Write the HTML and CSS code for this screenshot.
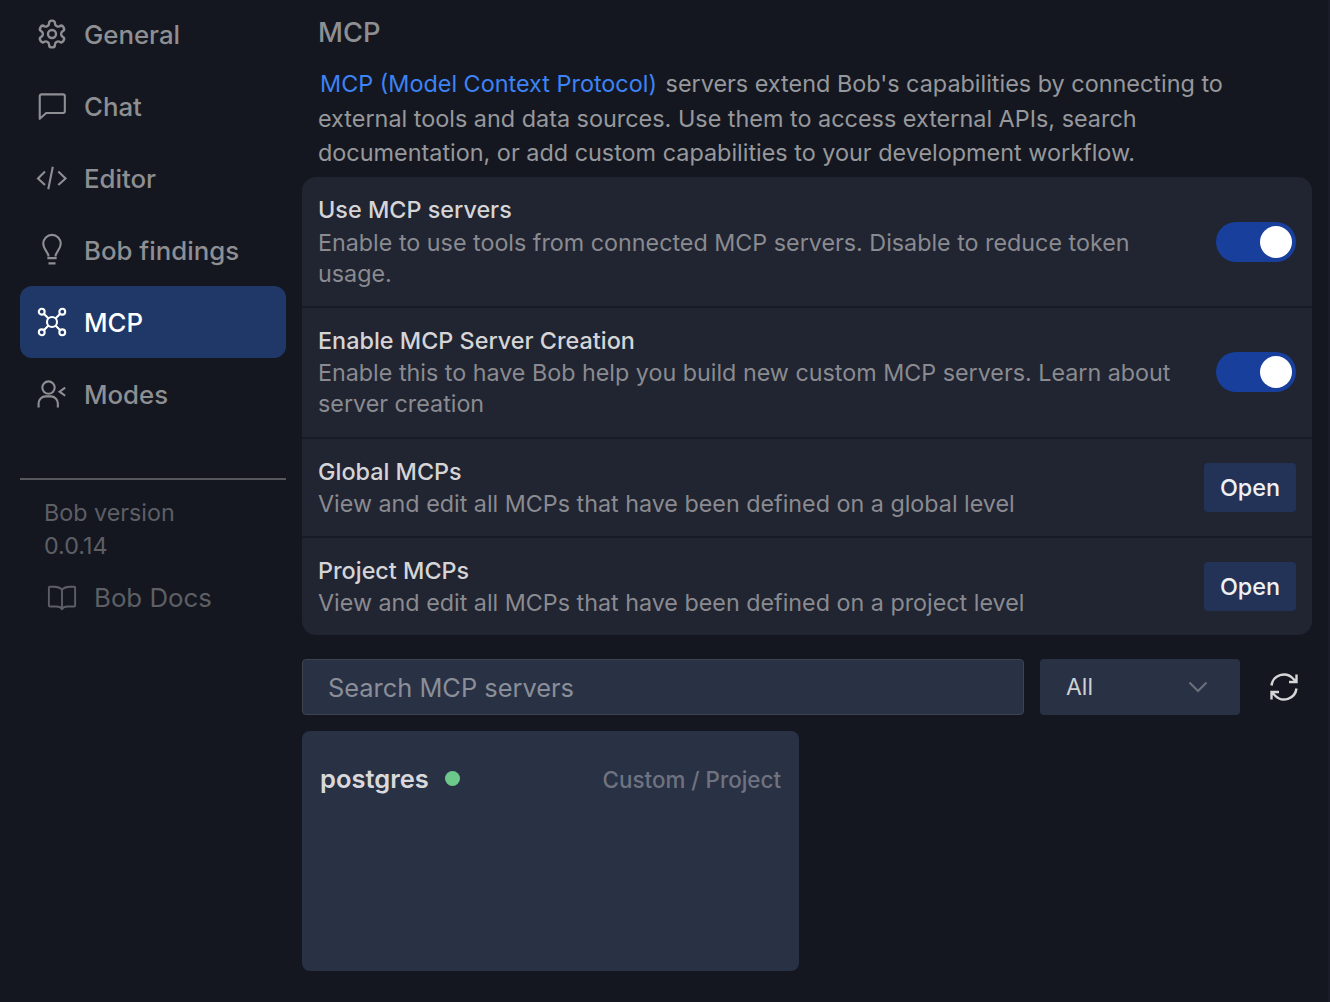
FILE: index.html
```html
<!DOCTYPE html>
<html lang="en">
<head>
<meta charset="utf-8">
<title>MCP settings</title>
<link rel="stylesheet" href="styles.css">
</head>
<body>
<div class="app">
  <aside class="sidebar">
    <nav class="nav">
      <a class="nav-item"><svg class="nav-icon" viewBox="1.500 1.500 21 21"><path d="M12.220 2h-.44a2 2 0 0 0-2 2v.18a2 2 0 0 1-1 1.730l-.43.25a2 2 0 0 1-2 0l-.15-.08a2 2 0 0 0-2.730.73l-.22.38a2 2 0 0 0 .73 2.730l.15.1a2 2 0 0 1 1 1.720v.51a2 2 0 0 1-1 1.740l-.15.09a2 2 0 0 0-.73 2.730l.22.38a2 2 0 0 0 2.730.73l.15-.08a2 2 0 0 1 2 0l.43.25a2 2 0 0 1 1 1.730V20a2 2 0 0 0 2 2h.44a2 2 0 0 0 2-2v-.18a2 2 0 0 1 1-1.730l.43-.25a2 2 0 0 1 2 0l.15.08a2 2 0 0 0 2.730-.73l.22-.39a2 2 0 0 0-.73-2.730l-.15-.08a2 2 0 0 1-1-1.740v-.5a2 2 0 0 1 1-1.740l.15-.09a2 2 0 0 0 .73-2.730l-.22-.38a2 2 0 0 0-2.730-.73l-.15.08a2 2 0 0 1-2 0l-.43-.25a2 2 0 0 1-1-1.730V4a2 2 0 0 0-2-2z"/><circle cx="12" cy="12" r="3"/></svg><span>General</span></a>
      <a class="nav-item"><svg class="nav-icon" viewBox="0 0 24 24"><path d="M1.500 3.500a1.500 1.500 0 0 1 1.500-1.500h18.500a1.500 1.500 0 0 1 1.500 1.500v13a1.500 1.500 0 0 1-1.500 1.500H7l-5.500 5z" stroke-linejoin="round"/></svg><span>Chat</span></a>
      <a class="nav-item"><svg class="nav-icon" viewBox="0 0 24 24"><path d="M6 6.500 0 12.400l6 5.600M17.400 6.500l6.200 5.900-6.200 5.600M12.700 2.300 8.800 21.700"/></svg><span>Editor</span></a>
      <a class="nav-item"><svg class="nav-icon" viewBox="0 0 24 24"><path d="M9 17.500c0-3.500-4.500-6-4.500-11a7.500 7.500 0 0 1 15 0c0 5-4.500 7.500-4.500 11M8 19h8M9 23.500h6"/></svg><span>Bob findings</span></a>
      <a class="nav-item active"><svg class="nav-icon" viewBox="0 0 24 24"><circle cx="12" cy="12" r="4.300"/><circle cx="3.200" cy="3.200" r="2.500"/><circle cx="20.800" cy="3.200" r="2.500"/><circle cx="3.200" cy="20.800" r="2.500"/><circle cx="20.800" cy="20.800" r="2.500"/><path d="m5 5 4 4M19 5l-4 4M5 19l4-4M19 19l-4-4"/></svg><span>MCP</span></a>
      <a class="nav-item"><svg class="nav-icon" viewBox="0 0 24 24"><circle cx="9" cy="6.500" r="5.300"/><path d="M.5 23.500v-3.500a6 6 0 0 1 6-6h4.500a6 6 0 0 1 6 6v3.500M23.300 6.500 18.500 10l4.800 3.500"/></svg><span>Modes</span></a>
    </nav>
    <hr class="side-rule">
    <div class="version">Bob version<br>0.0.14</div>
    <a class="docs"><svg class="docs-icon" viewBox="0 0 32 28"><path d="M16 5C14 3 11 2 8 2H3a1 1 0 0 0-1 1v19a1 1 0 0 0 1 1h7c3 0 5 1 6 3 1-2 3-3 6-3h7a1 1 0 0 0 1-1V3a1 1 0 0 0-1-1h-5c-3 0-6 1-8 3zM16 5v21" stroke-linejoin="round"/></svg><span>Bob Docs</span></a>
  </aside>

  <main class="main">
    <h1 class="title">MCP</h1>
    <p class="intro"><a class="intro-link">MCP (Model Context Protocol)</a> servers extend Bob's capabilities by connecting to external tools and data sources. Use them to access external APIs, search documentation, or add custom capabilities to your development workflow.</p>

    <section class="panel">
      <div class="row row-tall row-first">
        <div class="row-text">
          <div class="row-title">Use MCP servers</div>
          <div class="row-desc">Enable to use tools from connected MCP servers. Disable to reduce token usage.</div>
        </div>
        <span class="toggle"><span class="knob"></span></span>
      </div>
      <div class="row row-tall row-second">
        <div class="row-text">
          <div class="row-title">Enable MCP Server Creation</div>
          <div class="row-desc">Enable this to have Bob help you build new custom MCP servers. Learn about server creation</div>
        </div>
        <span class="toggle"><span class="knob"></span></span>
      </div>
      <div class="row row-short">
        <div class="row-text">
          <div class="row-title">Global MCPs</div>
          <div class="row-desc">View and edit all MCPs that have been defined on a global level</div>
        </div>
        <button class="open-btn">Open</button>
      </div>
      <div class="row row-short">
        <div class="row-text">
          <div class="row-title">Project MCPs</div>
          <div class="row-desc">View and edit all MCPs that have been defined on a project level</div>
        </div>
        <button class="open-btn">Open</button>
      </div>
    </section>

    <div class="filters">
      <div class="search">Search MCP servers</div>
      <div class="select"><span>All</span><svg class="chevron" viewBox="0 0 20 12"><path d="m1.500 1.500 8.500 8.500 8.500-8.500"/></svg></div>
      <svg class="refresh" viewBox="0 0 28 28"><path d="M1.500 12.500A12.500 12.500 0 0 1 23 5.500l3.500 3.500M26.500 15.500A12.500 12.500 0 0 1 5 22.500L1.500 19M26.500 1.500V9h-7.500M1.500 26.500V19H9"/></svg>
    </div>

    <article class="server">
      <div class="server-head">
        <span class="server-name">postgres</span>
        <span class="dot"></span>
        <span class="server-scope">Custom / Project</span>
      </div>
    </article>
  </main>
</div>
</body>
</html>
```
FILE: styles.css
```css
* { box-sizing: border-box; }
html, body { margin: 0; height: 100%; }
body {
  background: #141720;
  font-family: Inter, "Liberation Sans", sans-serif;
  overflow: hidden;
}
.app { display: flex; height: 1002px; width: 1330px; border-right: 2px solid #1a1d27; }
.sidebar { width: 302px; flex: none; padding: 0 16px 0 20px; }
.nav { margin-top: -2px; display: flex; flex-direction: column; }
.nav-item {
  height: 72px;
  display: flex;
  align-items: center;
  gap: 18px;
  padding-left: 18px;
  border-radius: 12px;
  color: #8e8f93;
  font-size: 25.800px;
  font-weight: 500;
}
.nav-item.active { background: #1f3868; color: #ffffff; }
.nav-icon { width: 28px; height: 28px; flex: none; fill: none; stroke: currentColor; stroke-width: 1.800; overflow: visible; }
.side-rule { border: 0; height: 2px; background: #55575d; margin: 48px 0 0; }
.version { padding: 16px 0 0 24px; color: #5d5f65; font-size: 23.300px; line-height: 33px; }
.docs { display: flex; align-items: center; gap: 17px; margin: 20px 0 0 27px; color: #5d5f65; font-size: 25.800px; }
.docs-icon { width: 30px; height: 28px; flex: none; fill: none; stroke: currentColor; stroke-width: 2; }
.main { flex: 1; min-width: 0; padding-right: 16px; }
.title { margin: 16px 0 0 16px; color: #8e8f93; font-size: 27.300px; line-height: 34px; font-weight: 500; }
.intro { margin: 17px 0 6px 16px; color: #97989c; font-size: 23.400px; line-height: 34.500px; width: 930px; }
.intro-link { color: #3d83f5; margin-left: 2px; margin-right: 2px; }
.panel { background: #181b25; border-radius: 14px; overflow: hidden; display: flex; flex-direction: column; gap: 2px; }
.row { display: flex; align-items: center; justify-content: space-between; padding: 0 16px; background: #212431; }
.row-tall { height: 129px; }
.row-first { padding-top: 1px; }
.row-first .row-title { margin: -1px 0 1px; }
.row-second .row-text { margin-bottom: 2px; }
.row-short { height: 97px; }
.row-text { width: 870px; }
.row-title { color: #d5d5d7; font-size: 23.400px; line-height: 33px; font-weight: 500; }
.row-desc { color: #8a8b90; font-size: 23.300px; line-height: 31px; }
.toggle { width: 80px; height: 40px; border-radius: 20px; background: #183f9c; display: flex; align-items: center; justify-content: flex-end; padding-right: 4px; flex: none; }
.knob { width: 32px; height: 32px; border-radius: 50%; background: #fff; }
.open-btn { width: 92px; height: 49px; border: 0; border-radius: 4px; background: #233358; color: #f0f0f2; font: 500 23.400px Inter, "Liberation Sans", sans-serif; }
.filters { display: flex; align-items: center; margin-top: 24px; gap: 16px; }
.search { width: 722px; height: 56px; border: 1.500px solid #3e4350; border-radius: 4px; background: #293145; color: #8a8e98; font-size: 25.400px; display: flex; align-items: center; padding: 2px 0 0 25px; }
.select { width: 200px; height: 56px; border-radius: 4px; background: #293145; color: #cfd0d3; font-size: 23px; display: flex; align-items: center; justify-content: space-between; padding: 0 32px 0 26px; }
.chevron { width: 20px; height: 12px; fill: none; stroke: #6b6f7a; stroke-width: 2.200; }
.refresh { width: 28px; height: 28px; margin-left: 14px; fill: none; stroke: #d6d6d8; stroke-width: 2.400; }
.server { width: 497px; height: 240px; margin-top: 16px; background: #293145; border-radius: 8px; padding: 30px 18px 0; }
.server-head { display: flex; align-items: center; height: 36px; }
.server-name { color: #d9d9db; font-size: 25.500px; font-weight: 600; }
.dot { width: 15px; height: 15px; border-radius: 50%; background: #6cc98b; margin-left: 16px; }
.server-scope { margin-left: auto; padding-top: 1px; color: #6f7380; font-size: 22.400px; font-weight: 500; }
```
